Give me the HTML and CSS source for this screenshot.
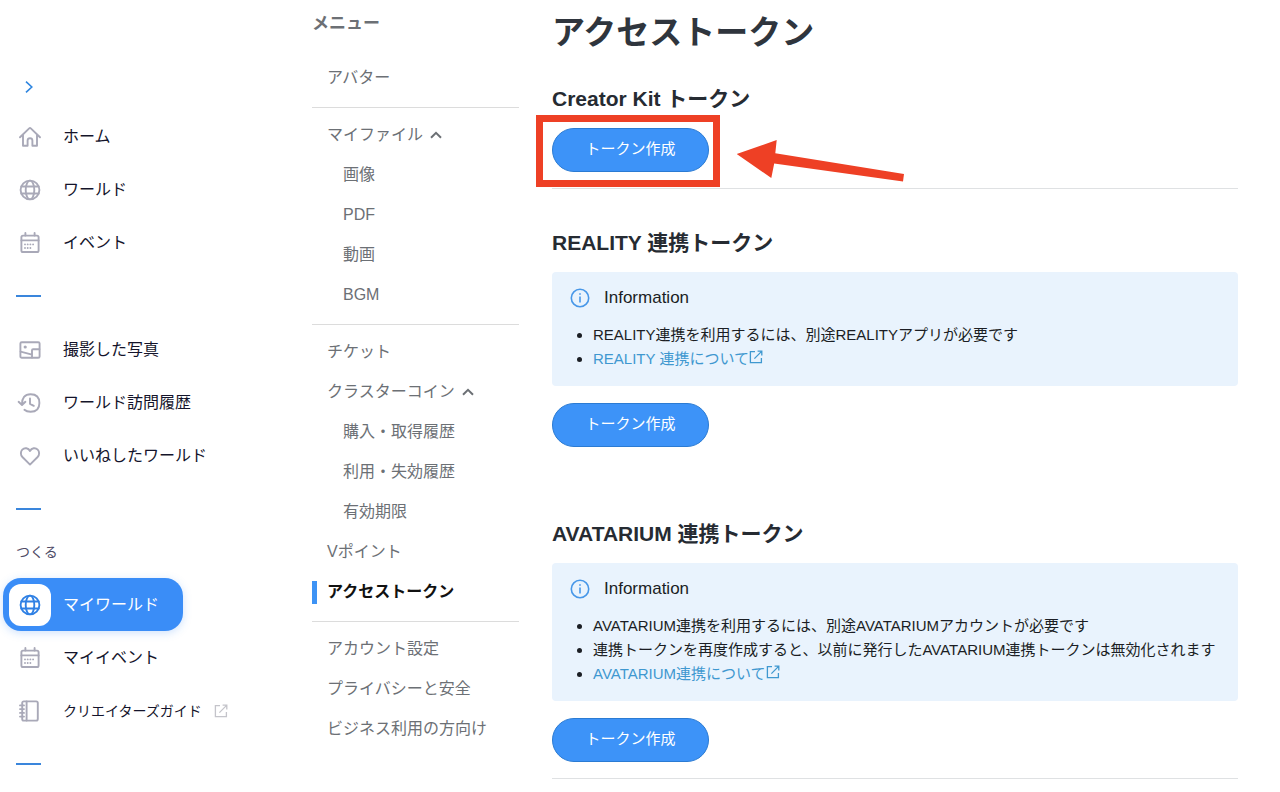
FILE: index.html
```html
<!DOCTYPE html>
<html lang="ja">
<head>
<meta charset="UTF-8" />
<meta name="viewport" content="width=device-width, initial-scale=1" />
<title>アクセストークン</title>
<link rel="stylesheet" href="styles.css">
</head>
<body>

  <!-- Shared icons -->
  <svg class="sprite" aria-hidden="true">
    <symbol id="icon-globe" viewBox="0 0 22 22">
      <circle cx="11" cy="11" r="9.4" />
      <ellipse cx="11" cy="11" rx="4.3" ry="9.4" />
      <path d="M2.4 7.5h17.2M2.4 14.5h17.2" />
    </symbol>
    <symbol id="icon-calendar" viewBox="0 0 22 22">
      <rect x="2.4" y="3.6" width="17.2" height="16.4" rx="1.6" />
      <path d="M2.4 8.4h17.2M6.4 1v2.6M15.6 1v2.6" />
      <path class="dots" d="M6 12.4h10.8M6 16h8" />
    </symbol>
    <symbol id="icon-external" viewBox="0 0 14 14">
      <path d="M6 1.7H1.4v11h11V8M8.6 1.2h4.2v4.2M12.6 1.4 5.4 8.6" />
    </symbol>
    <symbol id="icon-up" viewBox="0 0 12 8">
      <path d="M1 6.8 6 1.8l5 5" />
    </symbol>
    <symbol id="icon-info" viewBox="0 0 20 20">
      <circle cx="10" cy="10" r="8.7" />
      <path d="M10 5.2v1.6M10 8.4v6" />
    </symbol>
  </svg>

  <div class="page">

    <nav class="sidebar" aria-label="メインナビゲーション">
      <button class="sidebar-toggle" aria-label="メニューを開く">
        <svg class="icon-chevron" viewBox="0 0 8 12"><path d="M1 .6 6.8 6 1 11.4" /></svg>
      </button>

      <ul class="nav-list">
        <li>
          <a class="nav-item" href="#">
            <span class="nav-icon"><svg viewBox="0 0 22 22"><path d="M1 11.3 10.2 2.4q.8-.7 1.6 0L21 11.3M4 9v10.8h4.6v-5.2a2.4 2.4 0 0 1 4.8 0v5.2H18V9" /></svg></span>
            ホーム
          </a>
        </li>
        <li>
          <a class="nav-item" href="#">
            <span class="nav-icon"><svg><use href="#icon-globe" /></svg></span>
            ワールド
          </a>
        </li>
        <li>
          <a class="nav-item" href="#">
            <span class="nav-icon"><svg><use href="#icon-calendar" /></svg></span>
            イベント
          </a>
        </li>
      </ul>

      <hr class="nav-rule">

      <ul class="nav-list">
        <li>
          <a class="nav-item" href="#">
            <span class="nav-icon"><svg viewBox="0 0 22 22"><rect x="1.4" y="3.2" width="19.2" height="15.6" rx="1.4" /><path d="M1.6 12.6 13 15.6M13 18.6v-7.4q0-1 1-1h6.4" /><circle class="fill" cx="6.2" cy="8" r="1.6" /></svg></span>
            撮影した写真
          </a>
        </li>
        <li>
          <a class="nav-item" href="#">
            <span class="nav-icon"><svg viewBox="0 0 22 22"><path d="M3 12.4C2.8 6 5.8 2.2 11.6 2.2c6 0 8.8 3 8.8 8.8s-2.8 8.8-8.8 8.8c-2.8 0-4.8-.7-6.2-2M-.4 9.8 3 13l3.4-3.2M11 6.4v5.4l3.8 2" /></svg></span>
            ワールド訪問履歴
          </a>
        </li>
        <li>
          <a class="nav-item" href="#">
            <span class="nav-icon"><svg viewBox="0 0 22 22"><path d="M11 19.6 3.4 12C1.4 9.8 1.4 6.5 3.3 4.6c2.3-2.3 6.1-1.7 7.7 1.4 1.6-3.1 5.4-3.7 7.7-1.4 1.9 1.9 1.9 5.2-.1 7.4z" /></svg></span>
            いいねしたワールド
          </a>
        </li>
      </ul>

      <hr class="nav-rule">

      <h2 class="nav-label">つくる</h2>
      <ul class="nav-list">
        <li>
          <a class="nav-item nav-item-active" href="#" aria-current="page">
            <span class="nav-icon"><svg><use href="#icon-globe" /></svg></span>
            マイワールド
          </a>
        </li>
        <li>
          <a class="nav-item" href="#">
            <span class="nav-icon"><svg><use href="#icon-calendar" /></svg></span>
            マイイベント
          </a>
        </li>
        <li>
          <a class="nav-item nav-item-small" href="#">
            <span class="nav-icon"><svg viewBox="0 0 22 22"><rect x="3.2" y="1.4" width="15.6" height="19.2" rx="1.6" /><path d="M7.6 1.4v19.2M1 5.4h4M1 9.1h4M1 12.9h4M1 16.6h4" /></svg></span>
            クリエイターズガイド
            <svg class="nav-external"><use href="#icon-external" /></svg>
          </a>
        </li>
      </ul>

      <hr class="nav-rule">
    </nav>

    <nav class="settings" aria-label="メニュー">
      <h2 class="settings-title">メニュー</h2>

      <ul class="settings-group">
        <li><a class="settings-link" href="#">アバター</a></li>
      </ul>

      <ul class="settings-group">
        <li><button class="settings-link" aria-expanded="true">マイファイル <svg class="icon-up"><use href="#icon-up" /></svg></button></li>
        <li><a class="settings-link settings-sub" href="#">画像</a></li>
        <li><a class="settings-link settings-sub" href="#">PDF</a></li>
        <li><a class="settings-link settings-sub" href="#">動画</a></li>
        <li><a class="settings-link settings-sub" href="#">BGM</a></li>
      </ul>

      <ul class="settings-group">
        <li><a class="settings-link" href="#">チケット</a></li>
        <li><button class="settings-link" aria-expanded="true">クラスターコイン <svg class="icon-up"><use href="#icon-up" /></svg></button></li>
        <li><a class="settings-link settings-sub" href="#">購入・取得履歴</a></li>
        <li><a class="settings-link settings-sub" href="#">利用・失効履歴</a></li>
        <li><a class="settings-link settings-sub" href="#">有効期限</a></li>
        <li><a class="settings-link" href="#">Vポイント</a></li>
        <li><a class="settings-link settings-active" href="#" aria-current="page">アクセストークン</a></li>
      </ul>

      <ul class="settings-group">
        <li><a class="settings-link" href="#">アカウント設定</a></li>
        <li><a class="settings-link" href="#">プライバシーと安全</a></li>
        <li><a class="settings-link" href="#">ビジネス利用の方向け</a></li>
      </ul>
    </nav>

    <main class="content">
      <h1>アクセストークン</h1>

      <section class="token token-line">
        <h2>Creator Kit トークン</h2>
        <div class="token-action">
          <button class="button">トークン作成</button>
          <span class="mark-frame"></span>
          <svg class="mark-arrow" viewBox="0 0 170 44" aria-hidden="true">
            <path d="M.7 16 40.7 2l-1.4 13.2L168 36l-1 7.6L38.2 25.4 35.3 40z" />
          </svg>
        </div>
      </section>

      <section class="token">
        <h2>REALITY 連携トークン</h2>
        <div class="info">
          <p class="info-title"><svg class="icon-info"><use href="#icon-info" /></svg>Information</p>
          <ul class="info-list">
            <li>REALITY連携を利用するには、別途REALITYアプリが必要です</li>
            <li><a href="#">REALITY 連携について<svg class="icon-external"><use href="#icon-external" /></svg></a></li>
          </ul>
        </div>
        <button class="button">トークン作成</button>
      </section>

      <section class="token token-line">
        <h2>AVATARIUM 連携トークン</h2>
        <div class="info">
          <p class="info-title"><svg class="icon-info"><use href="#icon-info" /></svg>Information</p>
          <ul class="info-list">
            <li>AVATARIUM連携を利用するには、別途AVATARIUMアカウントが必要です</li>
            <li>連携トークンを再度作成すると、以前に発行したAVATARIUM連携トークンは無効化されます</li>
            <li><a href="#">AVATARIUM連携について<svg class="icon-external"><use href="#icon-external" /></svg></a></li>
          </ul>
        </div>
        <button class="button">トークン作成</button>
      </section>
    </main>

  </div>

</body>
</html>
```
FILE: styles.css
```css
* {
  box-sizing: border-box;
}

body {
  margin: 0;
  background: #fff;
  color: #1b1e24;
  font-family: "Liberation Sans", "Noto Sans CJK JP", sans-serif;
  font-size: 16px;
}

h1, h2, p, ul {
  margin: 0;
}

ul {
  padding: 0;
  list-style: none;
}

a {
  color: inherit;
  text-decoration: none;
}

button {
  font-family: inherit;
  cursor: pointer;
}

svg {
  fill: none;
  stroke: currentColor;
}

.sprite {
  display: none;
}

.page {
  display: flex;
  align-items: flex-start;
}

/* Left sidebar */

.sidebar {
  flex: 0 0 312px;
  padding: 74px 3px 0;
}

.sidebar-toggle {
  display: flex;
  align-items: center;
  justify-content: center;
  width: 26px;
  height: 26px;
  margin: 0 0 10px 13px;
  padding: 0;
  border: none;
  background: none;
  color: #2f86e0;
}

.icon-chevron {
  width: 8px;
  height: 12px;
  stroke-width: 1.6;
}

.nav-item {
  display: flex;
  align-items: center;
  gap: 12px;
  width: fit-content;
  height: 53px;
  padding: 0 24px 0 6px;
  border-radius: 18px;
  color: #14142b;
  line-height: 24px;
}

.nav-icon {
  display: flex;
  align-items: center;
  justify-content: center;
  width: 42px;
  height: 42px;
  border-radius: 12px;
  color: #a9a9b8;
}

.nav-icon svg {
  width: 22px;
  height: 22px;
  overflow: visible;
  stroke-width: 1.9;
  stroke-linecap: round;
  stroke-linejoin: round;
}

.dots {
  stroke-dasharray: 0 2.7;
}

.fill {
  fill: currentColor;
  stroke: none;
}

.nav-item-active {
  background: #3a8df7;
  color: #fff;
  box-shadow: 0 2px 8px rgba(58, 141, 247, 0.25);
}

.nav-item-active .nav-icon {
  background: #fff;
  color: #2f80e4;
}

.nav-item-small {
  font-size: 14px;
}

.nav-external {
  width: 14px;
  height: 14px;
  color: #c4c4ca;
  stroke-width: 1.3;
}

.nav-rule {
  width: 25px;
  height: 2px;
  margin: 26px 0 26px 13px;
  border: none;
  background: #3a86dc;
}

.nav-label {
  margin: 0 0 10px 13px;
  color: #4e4b66;
  font-size: 14px;
  font-weight: 400;
  line-height: 32px;
}

/* Settings menu */

.settings {
  flex: 0 0 207px;
  padding-top: 4px;
  color: #6c7075;
}

.settings-title {
  margin-bottom: 7px;
  font-size: 17px;
  line-height: 40px;
}

.settings-group {
  padding: 7px 0 9px;
  border-bottom: 1px solid #dcdcdc;
}

.settings-group:last-child {
  border-bottom: none;
}

.settings-link {
  display: flex;
  align-items: center;
  height: 40px;
  padding: 0 0 0 15px;
  border: none;
  background: none;
  color: inherit;
  font-size: 16px;
  line-height: 40px;
  white-space: nowrap;
}

.settings-sub {
  padding-left: 31px;
}

.settings-active {
  gap: 10px;
  padding-left: 0;
  color: #111;
  font-weight: 700;
}

.settings-active::before {
  content: "";
  width: 5px;
  height: 23px;
  background: #3d93f5;
}

.icon-up {
  width: 12px;
  height: 8px;
  margin-left: 7px;
  stroke-width: 2;
}

/* Main column */

.content {
  flex: 1;
  min-width: 0;
  padding: 11px 42px 0 33px;
}

h1 {
  margin-bottom: 28px;
  color: #2f353d;
  font-size: 33px;
  line-height: 44px;
}

.token {
  margin-bottom: 38px;
  padding-bottom: 33px;
}

.token:last-child {
  margin-bottom: 0;
}

.token-line {
  padding-bottom: 16px;
  border-bottom: 1px solid #dfe1e3;
}

.token h2 {
  margin-bottom: 13px;
  color: #262b32;
  font-size: 21px;
  line-height: 32px;
}

.button {
  display: block;
  width: 157px;
  height: 44px;
  padding: 0 0 2px;
  border: 1px solid #2b7bd3;
  border-radius: 22px;
  background: #3d93f8;
  color: #fff;
  font-size: 15px;
  line-height: 24px;
}

.info {
  margin-bottom: 17px;
  padding: 14px 18px 15px;
  border-radius: 4px;
  background: #e9f3fd;
}

.info-title {
  display: flex;
  align-items: center;
  gap: 14px;
  margin-bottom: 13px;
  font-size: 17px;
  line-height: 24px;
}

.icon-info {
  width: 20px;
  height: 20px;
  color: #4797e8;
  stroke-width: 1.6;
}

.info-list {
  padding-left: 23px;
  list-style: disc;
  font-size: 15px;
  line-height: 24px;
}

.info-list a {
  color: #3f98d0;
}

.icon-external {
  width: 14px;
  height: 14px;
  stroke-width: 1.3;
}

/* Highlight around the first button */

.token-action {
  position: relative;
}

.mark-frame {
  position: absolute;
  top: -13px;
  left: -16px;
  width: 184px;
  height: 72px;
  border: 7px solid #ee4025;
  pointer-events: none;
}

.mark-arrow {
  position: absolute;
  top: 10px;
  left: 184px;
  width: 170px;
  height: 44px;
  fill: #ee4025;
  stroke: none;
}
```
